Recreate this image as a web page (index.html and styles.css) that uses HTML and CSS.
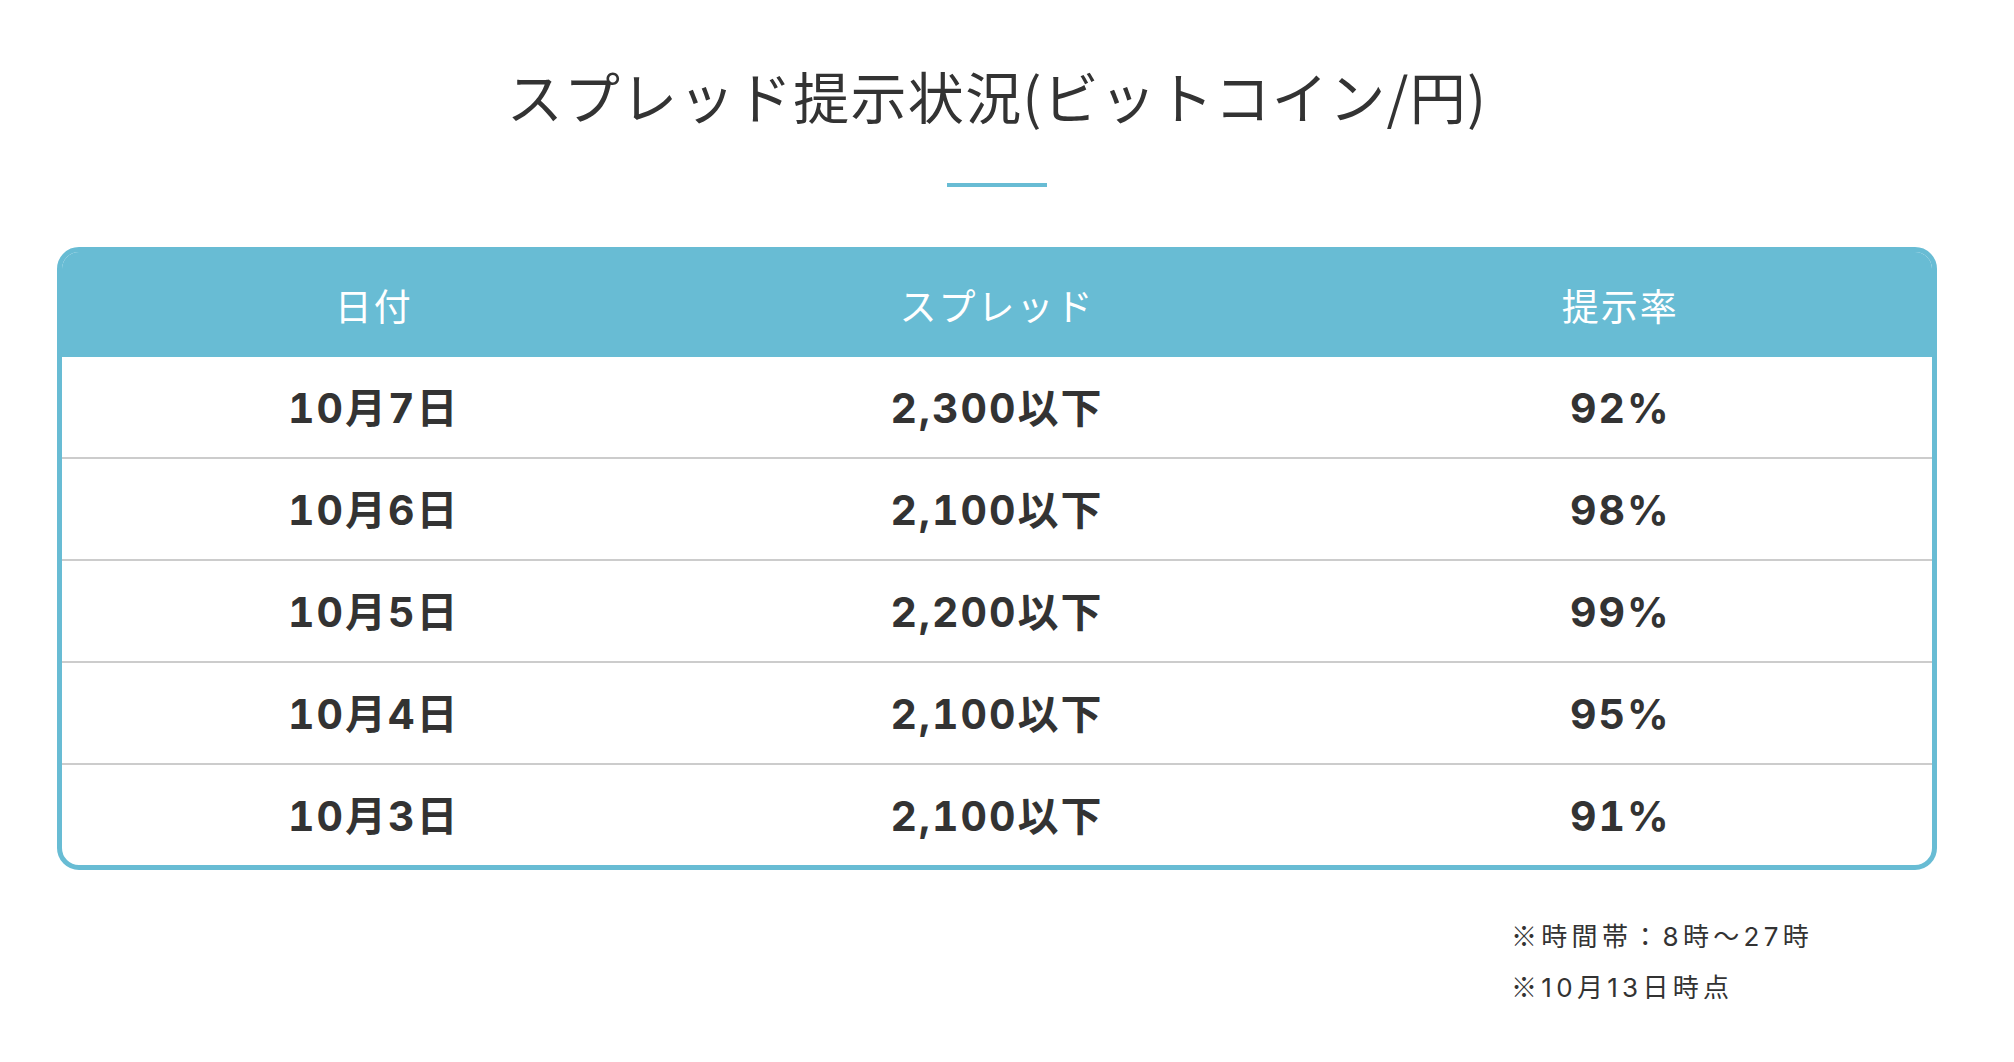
FILE: index.html
```html
<!DOCTYPE html>
<html lang="ja">
<head>
<meta charset="utf-8">
<title>スプレッド提示状況</title>
<link rel="stylesheet" href="styles.css">
</head>
<body>
<main class="page">
  <h1 class="title">スプレッド提示状況(ビットコイン/円)</h1>
  <div class="divider"></div>
  <div class="table">
    <div class="row head">
      <div class="cell">日付</div>
      <div class="cell">スプレッド</div>
      <div class="cell">提示率</div>
    </div>
    <div class="row">
      <div class="cell">10月7日</div>
      <div class="cell">2,300以下</div>
      <div class="cell">92%</div>
    </div>
    <div class="row">
      <div class="cell">10月6日</div>
      <div class="cell">2,100以下</div>
      <div class="cell">98%</div>
    </div>
    <div class="row">
      <div class="cell">10月5日</div>
      <div class="cell">2,200以下</div>
      <div class="cell">99%</div>
    </div>
    <div class="row">
      <div class="cell">10月4日</div>
      <div class="cell">2,100以下</div>
      <div class="cell">95%</div>
    </div>
    <div class="row">
      <div class="cell">10月3日</div>
      <div class="cell">2,100以下</div>
      <div class="cell">91%</div>
    </div>
  </div>
  <div class="notes">
    <p class="note"><span class="mark">※</span>時間帯：8時〜27時</p>
    <p class="note"><span class="mark">※</span>10月13日時点</p>
  </div>
</main>
</body>
</html>
```

FILE: styles.css
```css
html, body {
  margin: 0;
  padding: 0;
  background: #ffffff;
}

body {
  font-family: "Noto Sans CJK JP", "Noto Sans", sans-serif;
  color: #333333;
}

.page {
  width: 1880px;
  margin-left: 57px;
  padding-top: 56px;
  display: flex;
  flex-direction: column;
  align-items: center;
}

.title {
  margin: 0;
  font-size: 56px;
  line-height: 78px;
  font-weight: 400;
  letter-spacing: 1.3px;
  color: #333333;
  text-align: center;
}

.divider {
  width: 100px;
  height: 4px;
  background: #68bcd4;
  margin-top: 49px;
}

.table {
  align-self: stretch;
  margin-top: 60px;
  border: 5px solid #68bcd4;
  border-radius: 22px;
  overflow: hidden;
  background: #ffffff;
}

.row {
  display: grid;
  grid-template-columns: 1fr 1fr 1fr;
  height: 100px;
  align-items: center;
  border-top: 2px solid #cccccc;
}

.row.head {
  height: 105px;
  border-top: none;
  background: #68bcd4;
}

.row.head + .row {
  border-top: none;
}

.cell {
  text-align: center;
  font-family: "Inter", "Noto Sans CJK JP", sans-serif;
  font-size: 41px;
  line-height: 50px;
  font-weight: 700;
  font-variant-numeric: tabular-nums;
  letter-spacing: 2px;
  color: #333333;
  transform: translateY(1px);
}

.head .cell {
  font-family: "Noto Sans CJK JP", sans-serif;
  font-size: 37px;
  font-weight: 400;
  letter-spacing: 2px;
  color: #ffffff;
  transform: none;
}

.notes {
  align-self: stretch;
  margin-top: 40px;
  padding-left: 1454px;
}

.note {
  margin: 0;
  font-family: "Inter", "Noto Sans CJK JP", sans-serif;
  font-size: 26px;
  line-height: 49px;
  letter-spacing: 4.3px;
  color: #333333;
  white-space: nowrap;
}

.mark {
  font-family: "Noto Sans CJK JP", sans-serif;
}
```
